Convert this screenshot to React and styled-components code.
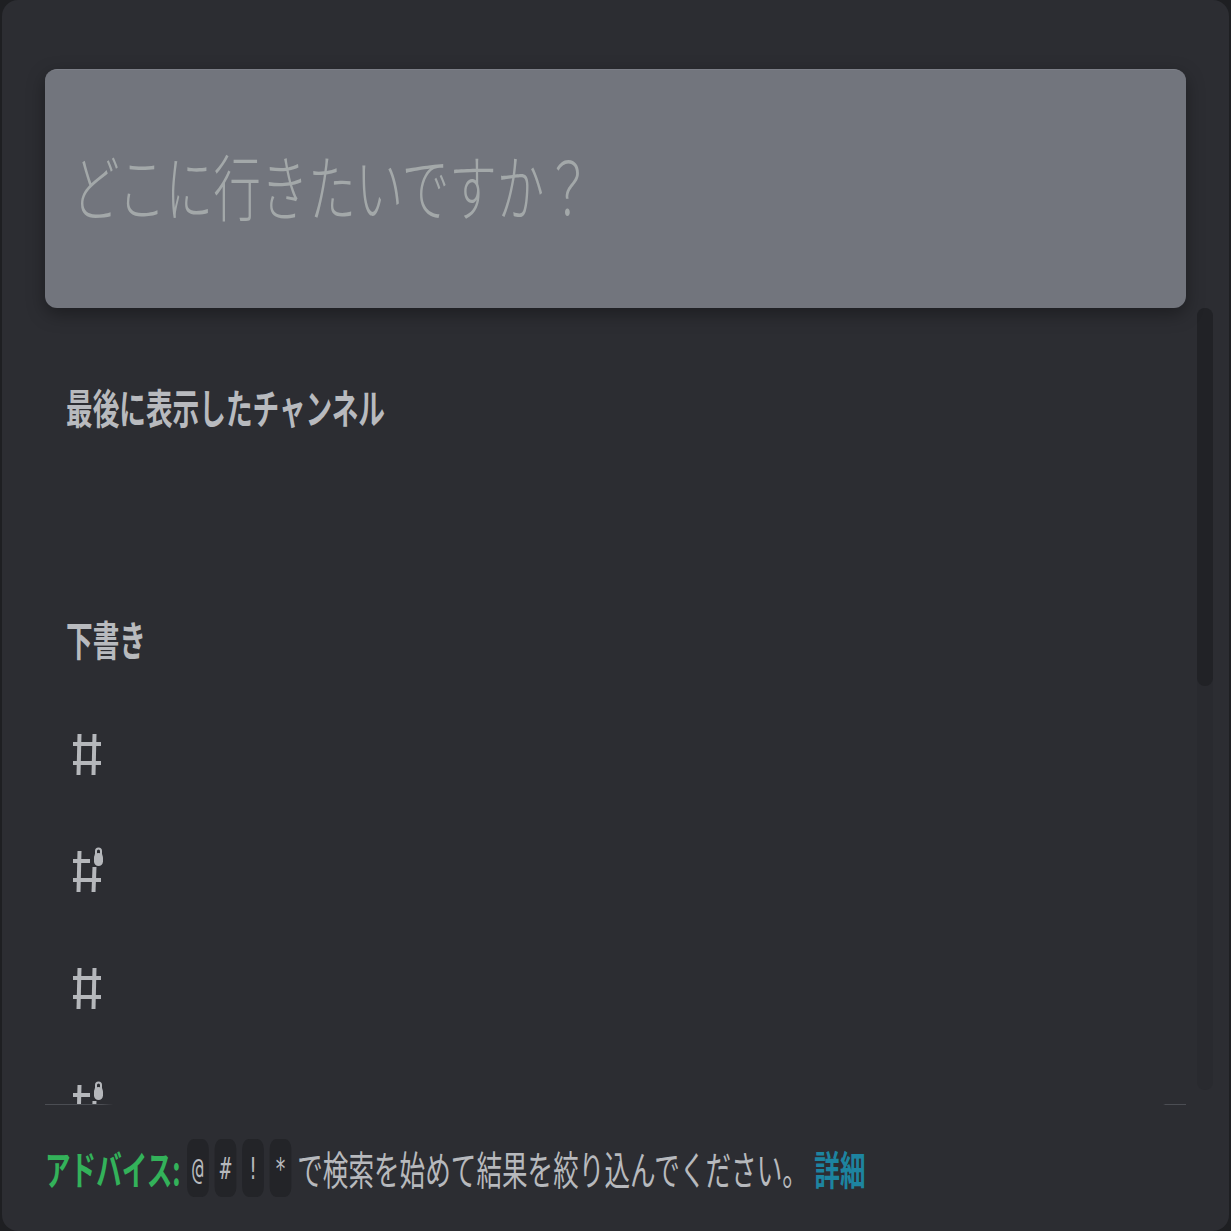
import React from "react";
import styled, { createGlobalStyle } from "styled-components";

const GlobalStyle = createGlobalStyle`
  html, body {
    margin: 0;
    padding: 0;
    background: #1e1f22;
  }
  body {
    font-family: "Noto Sans CJK JP", "Noto Sans", sans-serif;
  }
`;

const Modal = styled.div`
  box-sizing: border-box;
  width: 1227px;
  height: 1231px;
  margin: 0 2px;
  background: #2c2d32;
  border-radius: 16px;
  padding: 69px 16px 0 43px;
  display: flex;
  flex-direction: column;
  overflow: hidden;
`;

const SearchBox = styled.div`
  flex: none;
  height: 239px;
  margin-right: 27px;
  background: #72757d;
  border-radius: 12px;
  border-top: 1px solid #7c7f87;
  box-sizing: border-box;
  padding: 0 0 10px 27px;
  display: flex;
  align-items: center;
  box-shadow: 0 6px 18px rgba(0, 0, 0, 0.35);
  position: relative;
  z-index: 1;
`;

const Placeholder = styled.span`
  font-size: 72px;
  font-weight: 300;
  color: #a3a8a9;
  white-space: nowrap;
  transform: scaleX(0.66);
  transform-origin: left center;
  line-height: 1;
`;

const ScrollArea = styled.div`
  flex: none;
  height: 796px;
  display: flex;
  gap: 11px;
`;

const List = styled.div`
  flex: 1;
  overflow: hidden;
  padding-top: 68px;
`;

const SectionHeader = styled.div`
  height: 60px;
  padding-left: 21px;
  display: flex;
  align-items: center;
  font-size: 41px;
  font-weight: 700;
  color: #b8babe;
  white-space: nowrap;

  span {
    transform: scaleX(0.65);
    transform-origin: left center;
  }
`;

const EmptyGroup = styled.div`
  height: 172px;
`;

const Rows = styled.div`
  margin-top: 27px;
`;

const Row = styled.div`
  height: 117px;
  display: flex;
  align-items: center;
  padding-left: 28px;
  color: #b5b7bb;
`;

const Scrollbar = styled.div`
  width: 16px;
  flex: none;
  margin-bottom: 14px;
  border-radius: 8px;
  background: #292a2f;
  display: flex;
  flex-direction: column;
`;

const Thumb = styled.div`
  height: 378px;
  border-radius: 8px;
  background: #212226;
`;

const Divider = styled.div`
  flex: none;
  height: 1px;
  margin-right: 27px;
  background: linear-gradient(
    to right,
    #4b4d53 0%,
    #4b4d53 5%,
    transparent 6%,
    transparent 98%,
    #4b4d53 98.2%,
    #4b4d53 100%
  );
`;

const Footer = styled.div`
  flex: 1;
  display: flex;
  align-items: center;
`;

const FooterLine = styled.div`
  font-size: 40px;
  white-space: nowrap;
  color: #b7b9bd;
  transform: scaleX(0.64);
  transform-origin: left center;
  display: flex;
  align-items: center;
`;

const Protip = styled.span`
  color: #33b25a;
  font-weight: 700;
  margin-right: 10px;
`;

const Key = styled.span`
  display: inline-flex;
  align-items: center;
  justify-content: center;
  height: 58px;
  padding: 0 8px;
  margin-right: 9px;
  border-radius: 10px;
  background: #232428;
  font-family: "DejaVu Sans Mono", monospace;
  font-size: 30px;
  color: #b7b9bd;

  &:last-of-type {
    margin-right: 2px;
  }
`;

const Link = styled.span`
  color: #1d84a0;
  font-weight: 700;
  margin-left: 10px;
`;

const HashIcon = ({ locked }) => (
  <svg width="32" height="52" viewBox="0 0 32 52" fill="none">
    <g stroke="currentColor" strokeWidth="4">
      <line x1="6.5" y1="6" x2="5.5" y2="47" />
      <line x1="21.5" y1={locked ? 22 : 6} x2="20.5" y2="47" />
      <line x1="0" y1="16" x2={locked ? 17 : 28} y2="16" />
      <line x1="0" y1="35" x2="28" y2="35" />
    </g>
    {locked && (
      <g fill="currentColor">
        <path d="M23 10 V6 a2.5 2.5 0 0 1 5 0 V10" stroke="currentColor" strokeWidth="2" fill="none" />
        <rect x="21" y="8" width="9" height="13" rx="4.5" />
      </g>
    )}
  </svg>
);

const channels = [false, true, false, true];

export default function App() {
  return (
    <>
      <GlobalStyle />
      <Modal>
        <SearchBox>
          <Placeholder>どこに行きたいですか？</Placeholder>
        </SearchBox>
        <ScrollArea>
          <List>
            <SectionHeader>
              <span>最後に表示したチャンネル</span>
            </SectionHeader>
            <EmptyGroup />
            <SectionHeader>
              <span>下書き</span>
            </SectionHeader>
            <Rows>
              {channels.map((locked, i) => (
                <Row key={i}>
                  <HashIcon locked={locked} />
                </Row>
              ))}
            </Rows>
          </List>
          <Scrollbar>
            <Thumb />
          </Scrollbar>
        </ScrollArea>
        <Divider />
        <Footer>
          <FooterLine>
            <Protip>アドバイス:</Protip>
            <Key>@</Key>
            <Key>#</Key>
            <Key>!</Key>
            <Key>*</Key>
            <span>で検索を始めて結果を絞り込んでください。</span>
            <Link>詳細</Link>
          </FooterLine>
        </Footer>
      </Modal>
    </>
  );
}
